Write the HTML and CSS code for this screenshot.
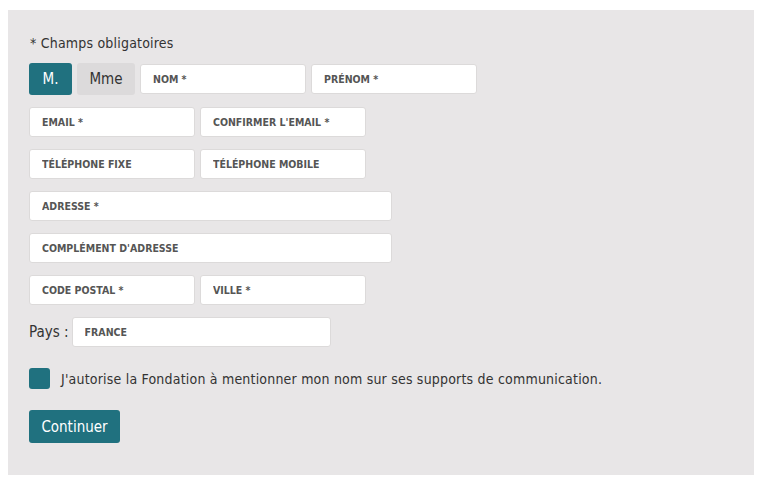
FILE: index.html
```html
<!DOCTYPE html>
<html lang="fr">
<head>
    <meta charset="UTF-8">
    <meta name="viewport" content="width=device-width, initial-scale=1.0">
    <title>Coordonnées</title>
    <link rel="stylesheet" href="styles.css">
</head>
<body>

    <div class="panel">
        <p class="required">* Champs obligatoires</p>

        <div class="row">
            <button class="civ active">M.</button>
            <button class="civ">Mme</button>
            <input type="text" class="field" placeholder="NOM *">
            <input type="text" class="field" placeholder="PRÉNOM *">
        </div>
        <div class="row">
            <input type="email" class="field" placeholder="EMAIL *">
            <input type="email" class="field" placeholder="CONFIRMER L'EMAIL *">
        </div>
        <div class="row">
            <input type="tel" class="field" placeholder="TÉLÉPHONE FIXE">
            <input type="tel" class="field" placeholder="TÉLÉPHONE MOBILE">
        </div>
        <div class="row">
            <input type="text" class="field wide" placeholder="ADRESSE *">
        </div>
        <div class="row">
            <input type="text" class="field wide" placeholder="COMPLÉMENT D'ADRESSE">
        </div>
        <div class="row">
            <input type="text" class="field" placeholder="CODE POSTAL *">
            <input type="text" class="field" placeholder="VILLE *">
        </div>
        <div class="row country">
            <label for="pays">Pays :</label>
            <input type="text" id="pays" class="field country-field" value="FRANCE">
        </div>

        <label class="consent">
            <span class="box"></span>
            J'autorise la Fondation à mentionner mon nom sur ses supports de communication.
        </label>

        <button class="submit">Continuer</button>
    </div>

</body>
</html>
```

FILE: styles.css
```css
body {
    margin: 0;
    padding: 10px 14px 9px 8px;
    background-color: #fff;
    font-family: "DejaVu Sans Condensed", "DejaVu Sans", sans-serif;
    color: #333;
}
.panel {
    background: #e8e6e7;
    padding: 24px 21px 32px 21px;
}
.required {
    margin: 0 0 11px 1px;
    font-size: 14px;
    line-height: 18px;
    letter-spacing: 0.2px;
}
.row {
    display: flex;
    align-items: center;
    gap: 5px;
    margin-bottom: 12px;
}
.civ {
    height: 32px;
    border: none;
    border-radius: 3px;
    font-family: inherit;
    font-size: 15px;
    color: #333;
    background-color: #dcdadb;
    padding: 0;
    cursor: pointer;
}
.civ:first-child {
    width: 43px;
}
.civ + .civ {
    width: 58px;
}
.civ.active {
    background-color: #20717f;
    color: #fff;
}
.field {
    width: 166px;
    height: 30px;
    box-sizing: border-box;
    margin: 0;
    padding: 0 12px;
    border: 1px solid #dcdada;
    border-radius: 3px;
    background: #fff;
    font-family: inherit;
    font-size: 10.5px;
    font-weight: bold;
    color: #555;
}
.field::placeholder {
    color: #555;
}
.wide {
    width: 363px;
}
.country {
    gap: 3px;
}
.country label {
    font-size: 15px;
}
.country-field {
    width: 259px;
}
.consent {
    display: flex;
    align-items: center;
    gap: 11px;
    margin-top: 21px;
    font-size: 14px;
    letter-spacing: 0.2px;
    cursor: pointer;
}
.box {
    width: 21px;
    height: 21px;
    border-radius: 3px;
    background-color: #20717f;
}
.submit {
    margin-top: 21px;
    height: 33px;
    width: 91px;
    padding: 0;
    border: none;
    border-radius: 3px;
    background-color: #20717f;
    color: #fff;
    font-family: inherit;
    font-size: 15px;
    cursor: pointer;
}
```
